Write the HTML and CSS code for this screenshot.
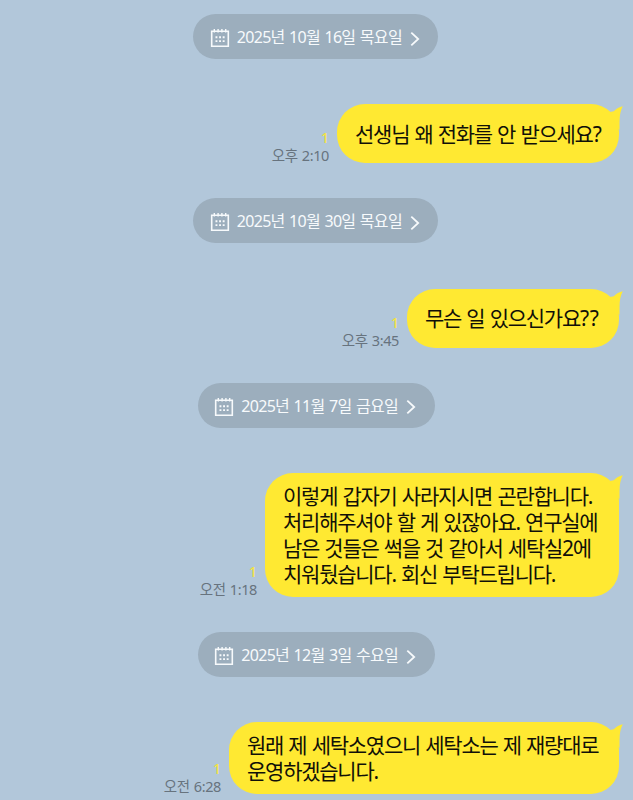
FILE: index.html
```
<!DOCTYPE html>
<html lang="ko">
<head>
<meta charset="utf-8">
<title>채팅</title>
<link rel="stylesheet" href="styles.css">
</head>
<body>
<svg class="defs" width="0" height="0" aria-hidden="true">
  <symbol id="calendar" viewBox="0 0 20 20">
    <path d="M1.700 3.200h16.600v15.100H1.700z" fill="none" stroke="currentColor" stroke-width="1.600"/>
    <path d="M4.300 1v3.400M8.100 1v3.400M11.900 1v3.400M15.700 1v3.400" stroke="currentColor" stroke-width="1.400"/>
    <path d="M5.500 8.300h1.900v1.900H5.500zM9.100 8.300h1.900v1.900H9.100zM12.700 8.300h1.900v1.900h-1.900zM5.500 12.200h1.900v1.900H5.500zM9.100 12.200h1.900v1.900H9.100zM12.700 12.200h1.900v1.900h-1.900z" fill="currentColor"/>
  </symbol>
  <symbol id="chevron" viewBox="0 0 10 16">
    <path d="M1.300 1.600L8.200 8l-6.900 6.400" fill="none" stroke="currentColor" stroke-width="1.800"/>
  </symbol>
  <symbol id="tail" viewBox="0 0 16 26">
    <path d="M3 8L6.800 7.200Q10.500 3.200 15.800 2.200Q12.500 8 12.500 18V26Q7 20 3 8z" fill="currentColor"/>
  </symbol>
</svg>
<main class="chat">
  <div class="date"><svg class="cal"><use href="#calendar"/></svg><span class="day">2025년 10월 16일 목요일</span><svg class="chev"><use href="#chevron"/></svg></div>
  <section class="message">
    <div class="meta"><span class="unread">1</span><time>오후 2:10</time></div>
    <div class="bubble b1"><svg class="tail"><use href="#tail"/></svg><p><span>선생님 왜 전화를 안 받으세요?</span></p></div>
  </section>
  <div class="date"><svg class="cal"><use href="#calendar"/></svg><span class="day">2025년 10월 30일 목요일</span><svg class="chev"><use href="#chevron"/></svg></div>
  <section class="message">
    <div class="meta"><span class="unread">1</span><time>오후 3:45</time></div>
    <div class="bubble b2"><svg class="tail"><use href="#tail"/></svg><p><span>무슨 일 있으신가요<b>??</b></span></p></div>
  </section>
  <div class="date short"><svg class="cal"><use href="#calendar"/></svg><span class="day">2025년 11월 7일 금요일</span><svg class="chev"><use href="#chevron"/></svg></div>
  <section class="message">
    <div class="meta"><span class="unread">1</span><time>오전 1:18</time></div>
    <div class="bubble b3"><svg class="tail"><use href="#tail"/></svg><p><span>이렇게 갑자기 사라지시면 곤란합니다.</span><span>처리해주셔야 할 게 있잖아요. 연구실에</span><span>남은 것들은 썩을 것 같아서 세탁실2에</span><span>치워뒀습니다. 회신 부탁드립니다.</span></p></div>
  </section>
  <div class="date short"><svg class="cal"><use href="#calendar"/></svg><span class="day">2025년 12월 3일 수요일</span><svg class="chev"><use href="#chevron"/></svg></div>
  <section class="message">
    <div class="meta"><span class="unread">1</span><time>오전 6:28</time></div>
    <div class="bubble b4"><svg class="tail"><use href="#tail"/></svg><p><span>원래 제 세탁소였으니 세탁소는 제 재량대로</span><span>운영하겠습니다.</span></p></div>
  </section>
</main>
</body>
</html>
```

FILE: styles.css
```
* { box-sizing: border-box; }
body {
  margin: 0;
  background: #b2c7da;
  font-family: "Noto Sans", "Noto Sans CJK KR", sans-serif;
  overflow: hidden;
}
.defs { position: absolute; }
.chat {
  height: 800px;
  padding: 14px 14px 0 0;
  display: flex;
  flex-direction: column;
}
.date {
  flex: none;
  width: 245px;
  height: 45px;
  margin-left: 193.3px;
  padding: 2px 18.5px 0 16.5px;
  border-radius: 23px;
  background: #9caebd;
  color: #f7fafc;
  display: flex;
  align-items: center;
}
.date.short { width: 237px; margin-left: 197.8px; }
.cal { width: 20px; height: 20px; flex: none; margin-top: 1px; }
.day {
  margin: -1px 0 0 7px;
  font-size: 16px;
  line-height: 24px;
  white-space: nowrap;
  letter-spacing: -0.7px;
  word-spacing: 1px;
}
.chev { width: 10px; height: 16px; flex: none; margin: 2px 0 0 auto; }
.message {
  flex: none;
  margin: 45.2px 0 35.2px;
  display: flex;
  justify-content: flex-end;
  align-items: flex-end;
}
.meta {
  margin: 0 8px -1px 0;
  display: flex;
  flex-direction: column;
  align-items: flex-end;
  font-size: 14.5px;
  line-height: 17px;
  color: #67737e;
}
.unread {
  margin-bottom: 1px;
  color: #f4e344;
  font-size: 14px;
  font-weight: 500;
  line-height: 16px;
}
time { letter-spacing: -0.4px; word-spacing: 0.8px; white-space: nowrap; }
.bubble {
  position: relative;
  min-height: 59px;
  padding: 10px 0 10px 18px;
  border-radius: 28px;
  background: #ffe932;
  color: #111008;
  display: flex;
  align-items: center;
}
.b1 { width: 282px; }
.b2 { width: 212px; }
.b3 { width: 354px; }
.b4 { width: 390px; }
.bubble p { margin: 0; font-size: 21px; line-height: 26px; }
.bubble p span {
  display: block;
  white-space: nowrap;
  letter-spacing: -1.25px;
  word-spacing: 1px;
}
.bubble b { font-weight: 400; letter-spacing: 0.6px; }
.tail {
  position: absolute;
  top: 0;
  right: -3.5px;
  width: 16px;
  height: 26px;
  color: #ffe932;
}
```
